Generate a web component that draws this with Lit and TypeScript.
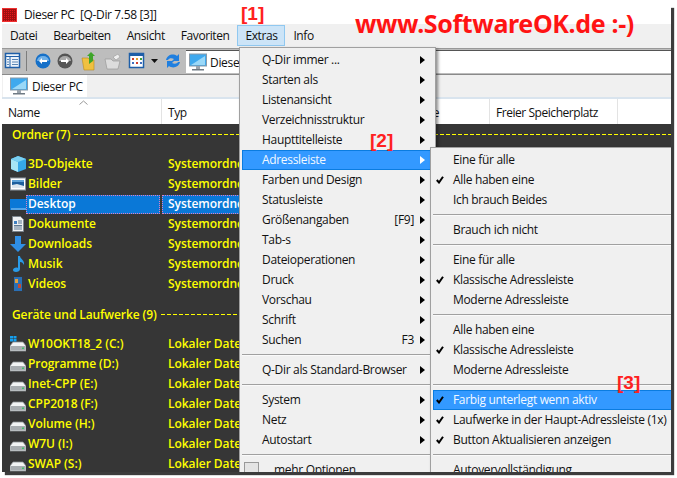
import { LitElement, html, css, svg } from "lit";
import { customElement } from "lit/decorators.js";

const monitor = svg`<rect x="1.5" y="1" width="17" height="12" fill="#3fa9ee" stroke="#8a9aa8"/><path d="M3 12L17 3v9z" fill="#9ad8f8"/><rect x="8" y="13" width="4" height="3" fill="#9aa4ad"/><rect x="4" y="16" width="12" height="1.5" fill="#6f7a84"/>`;
const icons: Record<string, unknown> = {
  cube: svg`<path d="M8 0l8 3v10l-8 3-7-3V3z" fill="#35a7e8"/><path d="M1 3l7 3v10l-7-3z" fill="#a6e4f5"/><path d="M1 3l7-3 8 3-8 3z" fill="#7ad0f2"/>`,
  pic: svg`<rect x=".5" y="2" width="15" height="12" fill="#fff" stroke="#8b96a0"/><rect x="2" y="4" width="12" height="8" fill="#1d5f9e"/><path d="M2 9l5-1 7 2v2H2z" fill="#dce6ee"/><rect x="2" y="4" width="12" height="2" fill="#5fa3d8"/>`,
  desk: svg`<rect x="0" y="3" width="16" height="11" fill="#0a78d7"/><rect x="1" y="12.5" width="15" height="1" fill="#9fd0f5"/>`,
  doc: svg`<path d="M2.500 .5h8l3 3v12h-11z" fill="#eef0f2" stroke="#7c858d"/><path d="M4 5h3v3H4z" fill="#3e7fc0"/><path d="M8 5h4M8 7h4M4 9.500h8M4 11h8M4 13h8" stroke="#5f7a95"/>`,
  down: svg`<path d="M5 0h6v8h5l-8 8-8-8h5z" fill="#2f8fe6"/>`,
  music: svg`<path d="M8 0h2c0 3 5 4 4 9-1-2-2-3-4-3v7c0 2-2 3-4 3s-3-1-3-2c0-2 3-3 5-2z" fill="#2a9be8"/>`,
  film: svg`<rect x="1" y="0" width="14" height="16" fill="#34383c"/><rect x="4" y="1" width="8" height="14" fill="#2a6fb5"/><rect x="5" y="3" width="3" height="4" fill="#e0a040"/><rect x="8" y="8" width="3" height="4" fill="#c94a30"/>`,
  drive: svg`<path d="M3 6h10l3 4v5H0v-5z" fill="#f2f4f5" stroke="#8b8f93" stroke-width=".8"/><rect x=".5" y="10" width="15" height="4.500" fill="#a8adb1"/><rect x="12" y="11.500" width="2" height="1.500" fill="#3ec46d"/>`,
  cdrive: svg`<path d="M3 6h10l3 4v5H0v-5z" fill="#f2f4f5" stroke="#8b8f93" stroke-width=".8"/><rect x=".5" y="10" width="15" height="4.500" fill="#a8adb1"/><rect x="12" y="11.500" width="2" height="1.500" fill="#3ec46d"/><path d="M0 0h3v2.500H0zM3.500 0h3v2.500h-3zM0 3h3v2.500H0zM3.500 3h3v2.500h-3z" fill="#14a0f0"/>`,
};

const folders = [
  ["cube", "3D-Objekte"], ["pic", "Bilder"], ["desk", "Desktop"], ["doc", "Dokumente"],
  ["down", "Downloads"], ["music", "Musik"], ["film", "Videos"],
];
const drives = [
  ["cdrive", "W10OKT18_2 (C:)"], ["drive", "Programme (D:)"], ["drive", "Inet-CPP (E:)"], ["drive", "CPP2018 (F:)"],
  ["drive", "Volume (H:)"], ["drive", "W7U (I:)"], ["drive", "SWAP (S:)"],
];

type M = { t?: string; a?: boolean; k?: string; c?: boolean; hi?: boolean; s?: boolean };
const m1: M[] = [
  { t: "Q-Dir immer ...", a: true }, { t: "Starten als", a: true }, { t: "Listenansicht", a: true },
  { t: "Verzeichnisstruktur", a: true }, { t: "Haupttitelleiste", a: true }, { t: "Adressleiste", a: true, hi: true },
  { t: "Farben und Design", a: true }, { t: "Statusleiste", a: true }, { t: "Größenangaben", k: "[F9]", a: true },
  { t: "Tab-s", a: true }, { t: "Dateioperationen", a: true }, { t: "Druck", a: true }, { t: "Vorschau", a: true },
  { t: "Schrift", a: true }, { t: "Suchen", k: "F3", a: true }, { s: true },
  { t: "Q-Dir als Standard-Browser", a: true }, { s: true },
  { t: "System", a: true }, { t: "Netz", a: true }, { t: "Autostart", a: true }, { s: true },
];
const m2: M[] = [
  { t: "Eine für alle" }, { t: "Alle haben eine", c: true }, { t: "Ich brauch Beides" }, { s: true },
  { t: "Brauch ich nicht" }, { s: true },
  { t: "Eine für alle" }, { t: "Klassische Adressleiste", c: true }, { t: "Moderne Adressleiste" }, { s: true },
  { t: "Alle haben eine" }, { t: "Klassische Adressleiste", c: true }, { t: "Moderne Adressleiste" }, { s: true },
  { t: "Farbig unterlegt wenn aktiv", c: true, hi: true }, { t: "Laufwerke in der Haupt-Adressleiste (1x)", c: true },
  { t: "Button Aktualisieren anzeigen", c: true }, { s: true }, { t: "Autovervollständigung" },
];

@customElement("app-root")
export class AppRoot extends LitElement {
  static styles = css`
    :host { display: block; position: relative; width: 677px; height: 478px; overflow: hidden; background: #fff;
      font-family: "Open Sans", "Noto Sans", sans-serif; font-size: 12px; letter-spacing: -0.32px; color: #111; }
    .window { position: absolute; left: 2px; top: 5px; width: 669px; height: 467px; display: flex; flex-direction: column;
      background: #f0f0f0; box-shadow: 3px 3px 1px #3c3c3c; overflow: hidden; }
    .title { height: 19px; flex: none; background: #fff; display: flex; align-items: center; gap: 7px; font-size: 12px; letter-spacing: -0.36px; white-space: pre; }
    .logo { width: 15px; height: 14px; flex: none; background-color: #e8171b;
      background-image: linear-gradient(#a01010 1px, transparent 1px), linear-gradient(90deg, #a01010 1px, transparent 1px);
      background-size: 2px 2px; border: 1px solid #f03030; box-sizing: border-box; }
    .menubar { height: 23px; flex: none; display: flex; align-items: center; letter-spacing: -0.42px; }
    .mi { padding: 0 8px; height: 21px; line-height: 21px; box-sizing: border-box; }
    .mi.on { background: #cce4f7; border: 1px solid #90c8f0; padding: 0 7px; line-height: 20px; }
    .toolbar { height: 27px; flex: none; margin-top: 1px; display: flex; align-items: center; background: #bdbdbd; border-top: 1px solid #999; border-bottom: 1px solid #8a8a8a; box-sizing: border-box; }
    .tools { width: 184px; flex: none; display: flex; align-items: center; height: 100%; }
    .tools svg { flex: none; display: block; }
    .addr { flex: 1; height: 23px; background: #fff; border-top: 1px solid #555; box-sizing: border-box; display: flex; align-items: center; gap: 2px; padding-left: 2px; }
    .tabs { height: 24px; flex: none; padding-left: 1px; border-bottom: 2px solid #d9e4ee; box-sizing: border-box; }
    .tab { width: 84px; height: 22px; background: #fff; display: flex; align-items: center; gap: 3px; padding-left: 6px; box-sizing: border-box; }
    .head { height: 25px; flex: none; background: #fff; display: flex; position: relative; letter-spacing: -0.45px; }
    .hc { box-sizing: border-box; padding-left: 6px; padding-top: 1px; line-height: 25px; border-right: 1px solid #e3e3e3; flex: none; white-space: nowrap; }
    .hc.r1 { width: 128px; text-align: right; padding-right: 50px; }
    .hc.w1 { width: 160px; } .hc.w2 { width: 200px; } .hc.w3 { width: 128px; }
    .sort { position: absolute; left: 77px; top: 1px; }
    .list { flex: 1; background: #363636; color: #ffff00; font-weight: 600; letter-spacing: -0.05px; overflow: hidden; }
    .group { height: 20px; display: flex; align-items: center; gap: 4px; padding-left: 10px; font-weight: 600; margin-bottom: 10px; white-space: nowrap; letter-spacing: -0.1px; }
    .line { flex: 1; height: 1px; background: repeating-linear-gradient(90deg, #ffff00 0 4px, transparent 4px 6px); margin-top: 1px; }
    .row { height: 20px; display: flex; align-items: center; white-space: nowrap; }
    .ic { width: 16px; height: 16px; flex: none; margin: 0 0 0 8px; display: block; }
    .n { width: 134px; flex: none; padding-left: 2px; box-sizing: border-box; height: 19px; line-height: 18px; }
    .y { margin-left: 2px; width: 200px; padding-left: 6px; box-sizing: border-box; height: 19px; line-height: 18px; }
    .row.sel .n, .row.sel .y { background: #0a78d7; color: #fff; outline: 1px dotted #e080c0; outline-offset: -1px; }
    .gap { height: 10px; }
    .menu { position: absolute; background: #f0f0f0; border: 1px solid #a0a0a0; box-shadow: 2px 2px 3px rgba(0,0,0,.45); padding: 2px; box-sizing: border-box; color: #111; white-space: nowrap; }
    .m1 { left: 237px; top: 42px; width: 197px; height: 440px; }
    .m2 { left: 428px; top: 142px; width: 260px; height: 340px; }
    .r { height: 20px; display: flex; align-items: center; position: relative; box-sizing: border-box; padding-left: 20px; padding-bottom: 1px; }
    .r .k { position: absolute; right: 19px; top: 0; line-height: 19px; }
    .r .ar { position: absolute; left: 178px; top: 6px; width: 0; height: 0; border-left: 5px solid #000; border-top: 4px solid transparent; border-bottom: 4px solid transparent; }
    .r .ck { position: absolute; left: 3px; top: 6px; display: block; }
    .r.hi { background: #3399ff; color: #f2f8ff; box-shadow: inset 0 0 0 1px #0a7ce0; }
    .r.hi .ar { border-left-color: #fff; }
    .sep { height: 10px; display: flex; align-items: center; }
    .sep::after { content: ""; flex: 1; height: 1px; background: #a0a0a0; border-bottom: 1px solid #fafafa; }
    .more { display: flex; align-items: center; height: 20px; padding-bottom: 1px; box-sizing: border-box; }
    .more .box { width: 15px; height: 15px; margin-left: 2px; margin-right: 15px; border: 1px solid #999; background: #e4e4e4; box-sizing: border-box; flex: none; }
    .www { position: absolute; left: 355px; top: 6px; font: 700 25px "Noto Sans", sans-serif; letter-spacing: -0.35px; color: #ff1414; white-space: pre; }
    .tag { position: absolute; font: bold 19px "Liberation Sans", sans-serif; letter-spacing: 0; color: #ff2020; }
    .t1 { left: 241px; top: 3px; } .t2 { left: 370px; top: 130px; } .t3 { left: 617px; top: 372px; }
  `;

  private ico(name: string) {
    return html`<svg class="ic" viewBox="0 0 16 16">${icons[name]}</svg>`;
  }
  private rows(list: string[][], y: string) {
    return list.map(([i, n]) => html`<div class="row ${n === "Desktop" ? "sel" : ""}">${this.ico(i)}<span class="n">${n}</span><span class="y">${y}</span></div>`);
  }
  private items(list: M[]) {
    return list.map((m) => m.s ? html`<div class="sep"></div>` : html`<div class="r ${m.hi ? "hi" : ""}">
      ${m.c ? html`<svg class="ck" width="8" height="8" viewBox="0 0 8 8"><path d="M.8 4l2.200 2.500L7 .8" fill="none" stroke="#000" stroke-width="2"/></svg>` : ""}
      <span>${m.t}</span>${m.k ? html`<span class="k">${m.k}</span>` : ""}${m.a ? html`<span class="ar"></span>` : ""}</div>`);
  }
  render() {
    return html`
      <div class="window">
        <div class="title"><span class="logo"></span><span>Dieser PC  [Q-Dir 7.58 [3]]</span></div>
        <div class="menubar">
          <span class="mi">Datei</span><span class="mi">Bearbeiten</span><span class="mi">Ansicht</span><span class="mi">Favoriten</span>
          <span class="mi on">Extras</span><span class="mi">Info</span>
        </div>
        <div class="toolbar">
          <div class="tools">
            <svg width="184" height="25" viewBox="0 0 184 25">
              <rect x="3.500" y="4.500" width="14" height="14" fill="#eef4fa" stroke="#1f5fa8" stroke-width="1.500"/><path d="M3.500 7.500h14M8 8v10" stroke="#1f5fa8"/><path d="M10 10.500h6M10 13h6M10 15.500h6M5 10.500h2M5 13h2M5 15.500h2" stroke="#5a86b5"/>
              <path d="M24.500 2v20" stroke="#7d7d7d"/>
              <circle cx="41" cy="12" r="7.500" fill="#1670c8"/><path d="M35 12a6 5 0 0112 0z" fill="#70b0e8"/><path d="M37 12l3-3v2h5v2h-5v2z" fill="#fff"/>
              <circle cx="63" cy="12" r="7.500" fill="#555"/><path d="M57 12a6 5 0 0112 0z" fill="#aaa"/><path d="M67 12l-3-3v2h-5v2h5v2z" fill="#fff"/>
              <path d="M80 9h6l2 2h4v10H82z" fill="#f0c040" stroke="#b88a20" stroke-width=".6"/><path d="M87 15V7h-2l4-4 4 4h-2v5z" fill="#3fa52a"/>
              <path d="M103 10h6l2 2h7l-2 8h-11z" fill="#dcdcdc" stroke="#999" stroke-width=".7"/><path d="M111 8l5-3 2 3-4 3z" fill="#eee" stroke="#999" stroke-width=".6"/>
              <rect x="127.500" y="4.500" width="14" height="14" fill="#fff" stroke="#1f5fa8" stroke-width="1.500"/><rect x="127" y="4" width="15" height="3" fill="#1f5fa8"/><path d="M130 9h2v2h-2z" fill="#d04030"/><path d="M134 9h2v2h-2z" fill="#e0a030"/><path d="M138 9h2v2h-2z" fill="#40a040"/><path d="M130 13h2v2h-2z" fill="#4070c0"/><path d="M134 13h2v2h-2z" fill="#d04030"/><path d="M138 13h2v2h-2z" fill="#4070c0"/>
              <path d="M149 10h7l-3.500 4z" fill="#111"/>
              <path d="M164 11c1-5 7-7 11-4l2-2v7h-7l2-2c-2-1-5-1-6 1zM178 13c-1 5-7 7-11 4l-2 2v-7h7l-2 2c2 1 5 1 6-1z" fill="#1f7fe0"/>
            </svg>
          </div>
          <div class="addr"><svg width="20" height="19" viewBox="0 0 20 19">${monitor}</svg><span>Dieser PC</span></div>
        </div>
        <div class="tabs"><div class="tab"><svg width="20" height="19" viewBox="0 0 20 19">${monitor}</svg><span>Dieser PC</span></div></div>
        <div class="head">
          <span class="hc w1">Name</span><span class="hc w2">Typ</span>
          <span class="hc r1">Gesamtgröße</span>
          <span class="hc w3">Freier Speicherplatz</span>
          <svg class="sort" width="9" height="5" viewBox="0 0 9 5"><path d="M.5 4.500l4-3.500 4 3.500" fill="none" stroke="#999"/></svg>
        </div>
        <div class="list">
          <div class="group"><span>Ordner (7)</span><span class="line"></span></div>
          ${this.rows(folders, "Systemordner")}
          <div class="gap"></div><div class="group"><span>Geräte und Laufwerke (9)</span><span class="line"></span></div>
          ${this.rows(drives, "Lokaler Datenträger")}
        </div>
        <div class="menu m1">
          ${this.items(m1)}
          <div class="more"><span class="box"></span><span>mehr Optionen</span></div>
        </div>
        <div class="menu m2">${this.items(m2)}</div>
      </div>
      <div class="www">www.SoftwareOK.de :-)</div>
      <div class="tag t1">[1]</div><div class="tag t2">[2]</div><div class="tag t3">[3]</div>
    `;
  }
}
